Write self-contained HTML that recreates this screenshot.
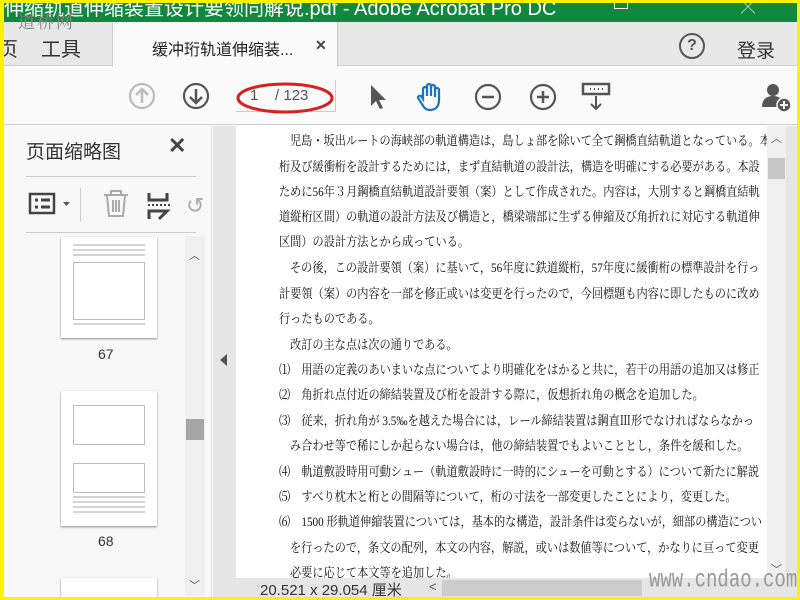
<!DOCTYPE html>
<html><head><meta charset="utf-8"><style>
*{margin:0;padding:0;box-sizing:border-box}
body{width:800px;height:600px;overflow:hidden;background:#fff200;position:relative;font-family:"Liberation Sans","Noto Sans CJK SC",sans-serif}
.a{position:absolute}
.t{font-family:"Liberation Serif","Noto Serif CJK SC","Noto Sans CJK JP",serif;font-size:13px;color:#111;white-space:nowrap;position:absolute;left:279px;transform:scaleX(0.86);transform-origin:0 0}
.ln{height:2px;background:#d4d4d4;margin:3px 0}
</style></head><body>
<div class="a" style="left:4px;top:3px;width:793px;height:594px;background:#fff;overflow:hidden">
 <div class="a" style="left:0;top:0;width:793px;height:19px;background:#12873e;color:#fff;font-size:20px;line-height:12px;white-space:nowrap;overflow:hidden">伸缩轨道伸缩装置设计要领同解说.pdf - Adobe Acrobat Pro DC</div>
 <div class="a" style="left:610px;top:0;width:14px;height:6px;border:1px solid #fff;border-top:none"></div>
 <div class="a" style="left:737px;top:-6px;color:#fff;font-size:14px">╳</div>
 <div class="a" style="left:0;top:19px;width:793px;height:44px;background:#e8e8e8;border-bottom:1px solid #ccc"></div>
 <div class="a" style="left:14px;top:5px;color:#888;font-size:17px;font-family:'Noto Serif CJK SC',serif;letter-spacing:2px">道桥网</div>
 <div class="a" style="left:-6px;top:30px;font-size:20px;color:#333">页</div>
 <div class="a" style="left:37px;top:30px;font-size:20px;color:#333">工具</div>
 <div class="a" style="left:108px;top:19px;width:226px;height:45px;background:#fafafa;border-left:1px solid #ccc;border-right:1px solid #ccc"></div>
 <div class="a" style="left:148px;top:33px;font-size:16px;color:#222">缓冲珩轨道伸缩装...</div>
 <div class="a" style="left:311px;top:34px;font-size:14px;color:#444;font-weight:bold">✕</div>
 <div class="a" style="left:675px;top:30px;width:26px;height:26px;border:2px solid #555;border-radius:50%;text-align:center;font-size:16px;font-weight:bold;color:#555;line-height:22px">?</div>
 <div class="a" style="left:733px;top:33px;font-size:19px;color:#333">登录</div>
 <div class="a" style="left:0;top:64px;width:793px;height:58px;background:#fafafa;border-bottom:1px solid #ccc"></div>
 <svg class="a" style="left:122px;top:77px" width="32" height="32"><circle cx="16" cy="16" r="12" fill="none" stroke="#bbb" stroke-width="2.2"/><path d="M16 23V10M10 15l6-6 6 6" fill="none" stroke="#bbb" stroke-width="2.5"/></svg>
 <svg class="a" style="left:176px;top:77px" width="32" height="32"><circle cx="16" cy="16" r="12" fill="none" stroke="#555" stroke-width="2.2"/><path d="M16 9v13M10 17l6 6 6-6" fill="none" stroke="#555" stroke-width="2.5"/></svg>
 <div class="a" style="left:232px;top:108px;width:100px;height:1px;background:#ccc"></div>
 <div class="a" style="left:246px;top:84px;font-size:15px;color:#555">1&nbsp;&nbsp;&nbsp;&nbsp;/ 123</div>
 <svg class="a" style="left:230px;top:76px" width="105" height="40"><ellipse cx="51" cy="19" rx="47" ry="14" fill="none" stroke="#d91f1f" stroke-width="3"/></svg>
 <div class="a" style="left:331px;top:77px;width:1px;height:32px;background:#ccc"></div>
 <svg class="a" style="left:362px;top:80px" width="22" height="28"><path d="M5 2v21l5-5 4 8 3-1-4-8h7z" fill="#555"/></svg>
 <svg class="a" style="left:410px;top:78px" width="32" height="32"><path d="M9 18V8a2 2 0 014 0v7V5a2 2 0 014 0v10V6a2 2 0 014 0v10V9a2 2 0 014 0v10c0 7-4 10-9 10-4 0-6-2-8-6l-4-6a2 2 0 013-2z" fill="none" stroke="#1a73c8" stroke-width="2.2"/></svg>
 <svg class="a" style="left:468px;top:78px" width="32" height="32"><circle cx="16" cy="16" r="12" fill="none" stroke="#555" stroke-width="2.2"/><path d="M10 16h12" stroke="#555" stroke-width="2.5"/></svg>
 <svg class="a" style="left:523px;top:78px" width="32" height="32"><circle cx="16" cy="16" r="12" fill="none" stroke="#555" stroke-width="2.2"/><path d="M10 16h12M16 10v12" stroke="#555" stroke-width="2.5"/></svg>
 <svg class="a" style="left:577px;top:78px" width="30" height="32"><rect x="2" y="3" width="26" height="10" fill="none" stroke="#555" stroke-width="2.5"/><path d="M9 8h1M13 8h1M17 8h1M21 8h1" stroke="#555" stroke-width="2"/><path d="M15 15v13M10 23l5 5 5-5" fill="none" stroke="#555" stroke-width="2"/></svg>
 <svg class="a" style="left:756px;top:78px" width="34" height="34"><circle cx="13" cy="9" r="6" fill="#555"/><path d="M2 26c0-8 5-11 11-11s9 3 9 6v5z" fill="#555"/><circle cx="24" cy="24" r="7" fill="#555" stroke="#fafafa" stroke-width="1.5"/><path d="M20 24h8M24 20v8" stroke="#fff" stroke-width="2"/></svg>
 <div class="a" style="left:3px;top:123px;width:205px;height:471px;background:#f8f8f8;border-right:1px solid #ddd"></div>
 <div class="a" style="left:22px;top:134px;font-size:19px;color:#333">页面缩略图</div>
 <div class="a" style="left:164px;top:130px;font-size:22px;color:#444;font-weight:bold">✕</div>
 <div class="a" style="left:22px;top:173px;width:170px;height:1px;background:#ccc"></div>
 <svg class="a" style="left:24px;top:187px" width="46" height="30"><rect x="2" y="4" width="24" height="19" fill="none" stroke="#444" stroke-width="2.5"/><path d="M7 10h3M13 10h9M7 17h3M13 17h9" stroke="#444" stroke-width="3"/><path d="M35 12h7l-3.5 4z" fill="#555"/></svg>
 <div class="a" style="left:76px;top:185px;width:1px;height:34px;background:#ccc"></div>
 <svg class="a" style="left:97px;top:185px" width="30" height="32"><path d="M3 7h24M10 7V3h10v4M6 8l2 20h14l2-20M12 12v12M15 12v12M18 12v12" fill="none" stroke="#aaa" stroke-width="2"/></svg>
 <svg class="a" style="left:141px;top:188px" width="28" height="30"><path d="M4 2v7h18V2M4 28v-8h18l-8 8" fill="none" stroke="#444" stroke-width="3"/><path d="M3 14h22" stroke="#444" stroke-width="2" stroke-dasharray="2 2"/></svg>
 <div class="a" style="left:182px;top:190px;font-size:22px;color:#aaa">↺</div>
 <div class="a" style="left:22px;top:229px;width:170px;height:1px;background:#ccc"></div>
 <div class="a" style="left:181px;top:233px;width:20px;height:360px;background:#f0f0f0"></div>
 <div class="a" style="left:185px;top:244px;font-size:11px;color:#555">︿</div>
 <div class="a" style="left:182px;top:416px;width:18px;height:21px;background:#a6a6a6"></div>
 <div class="a" style="left:185px;top:574px;font-size:11px;color:#555">﹀</div>
 <div class="a" style="left:57px;top:234px;width:96px;height:101px;background:#fff;box-shadow:0 1px 2px #888;padding:4px 12px"><div class="ln"></div><div class="ln"></div><div class="ln"></div><div style="height:58px;border:1px solid #bbb;margin-top:6px"></div><div class="ln"></div></div>
 <div class="a" style="left:94px;top:343px;font-size:14px;color:#333">67</div>
 <div class="a" style="left:57px;top:388px;width:96px;height:135px;background:#fff;box-shadow:0 1px 2px #888;padding:14px 12px"><div style="height:40px;border:1px solid #bbb"></div><div style="height:30px;border:1px solid #bbb;margin-top:18px"></div><div class="ln"></div><div class="ln"></div><div class="ln"></div><div class="ln"></div></div>
 <div class="a" style="left:94px;top:530px;font-size:14px;color:#333">68</div>
 <div class="a" style="left:57px;top:575px;width:96px;height:25px;background:#fff;box-shadow:0 1px 2px #888"></div>
 <div class="a" style="left:209px;top:123px;width:23px;height:471px;background:#e6e6e6"></div>
 <div class="a" style="left:216px;top:351px;width:0;height:0;border-top:6px solid transparent;border-bottom:6px solid transparent;border-right:7px solid #555"></div>
 <div class="a" style="left:232px;top:123px;width:531px;height:452px;background:#fff;overflow:hidden">
  <div style="position:relative;left:-236px;top:-129px">
  <div class="t" style="top:133px;left:290px">児島・坂出ルートの海峡部の軌道構造は，島しょ部を除いて全て鋼橋直結軌道となっている。本</div>
  <div class="t" style="top:159px">桁及び緩衝桁を設計するためには，まず直結軌道の設計法，構造を明確にする必要がある。本設</div>
  <div class="t" style="top:184px">ために56年３月鋼橋直結軌道設計要領（案）として作成された。内容は，大別すると鋼橋直結軌</div>
  <div class="t" style="top:209px">道縦桁区間）の軌道の設計方法及び構造と，橋梁端部に生ずる伸縮及び角折れに対応する軌道伸</div>
  <div class="t" style="top:234px">区間）の設計方法とから成っている。</div>
  <div class="t" style="top:260px;left:290px">その後，この設計要領（案）に基いて，56年度に鉄道縦桁，57年度に緩衝桁の標準設計を行っ</div>
  <div class="t" style="top:286px">計要領（案）の内容を一部を修正或いは変更を行ったので，今回標題も内容に即したものに改め</div>
  <div class="t" style="top:311px">行ったものである。</div>
  <div class="t" style="top:337px;left:290px">改訂の主な点は次の通りである。</div>
  <div class="t" style="top:362px">⑴　用語の定義のあいまいな点についてより明確化をはかると共に，若干の用語の追加又は修正</div>
  <div class="t" style="top:387px">⑵　角折れ点付近の締結装置及び桁を設計する際に，仮想折れ角の概念を追加した。</div>
  <div class="t" style="top:413px">⑶　従来，折れ角が 3.5‰を越えた場合には，レール締結装置は鋼直Ⅲ形でなければならなかっ</div>
  <div class="t" style="top:438px;left:290px">み合わせ等で稀にしか起らない場合は，他の締結装置でもよいこととし，条件を緩和した。</div>
  <div class="t" style="top:464px">⑷　軌道敷設時用可動シュー（軌道敷設時に一時的にシューを可動とする）について新たに解説</div>
  <div class="t" style="top:489px">⑸　すべり枕木と桁との間隔等について，桁の寸法を一部変更したことにより，変更した。</div>
  <div class="t" style="top:514px">⑹　1500 形軌道伸縮装置については，基本的な構造，設計条件は変らないが，細部の構造につい</div>
  <div class="t" style="top:540px;left:290px">を行ったので，条文の配列，本文の内容，解説，或いは数値等について，かなりに亘って変更</div>
  <div class="t" style="top:565px;left:290px">必要に応じて本文等を追加した。</div>
  </div>
 </div>
 <div class="a" style="left:763px;top:123px;width:19px;height:452px;background:#f0f0f0"></div>
 <div class="a" style="left:767px;top:127px;font-size:11px;color:#555">︿</div>
 <div class="a" style="left:764px;top:155px;width:17px;height:21px;background:#c8c8c8"></div>
 <div class="a" style="left:767px;top:558px;font-size:11px;color:#555">﹀</div>
 <div class="a" style="left:782px;top:123px;width:11px;height:471px;background:#e6e6e6"></div>
 <div class="a" style="left:232px;top:575px;width:561px;height:19px;background:#e6e6e6"></div>
 <div class="a" style="left:256px;top:576px;font-size:15px;color:#333">20.521 x 29.054 厘米</div>
 <div class="a" style="left:425px;top:576px;font-size:13px;color:#555">&lt;</div>
 <div class="a" style="left:438px;top:577px;width:200px;height:16px;background:#ccc"></div>
 <div class="a" style="left:645px;top:566px;font-family:'Liberation Mono',monospace;font-size:19px;color:#999;transform:scaleY(1.3)">www.cndao.com</div>
</div>
</body></html>
